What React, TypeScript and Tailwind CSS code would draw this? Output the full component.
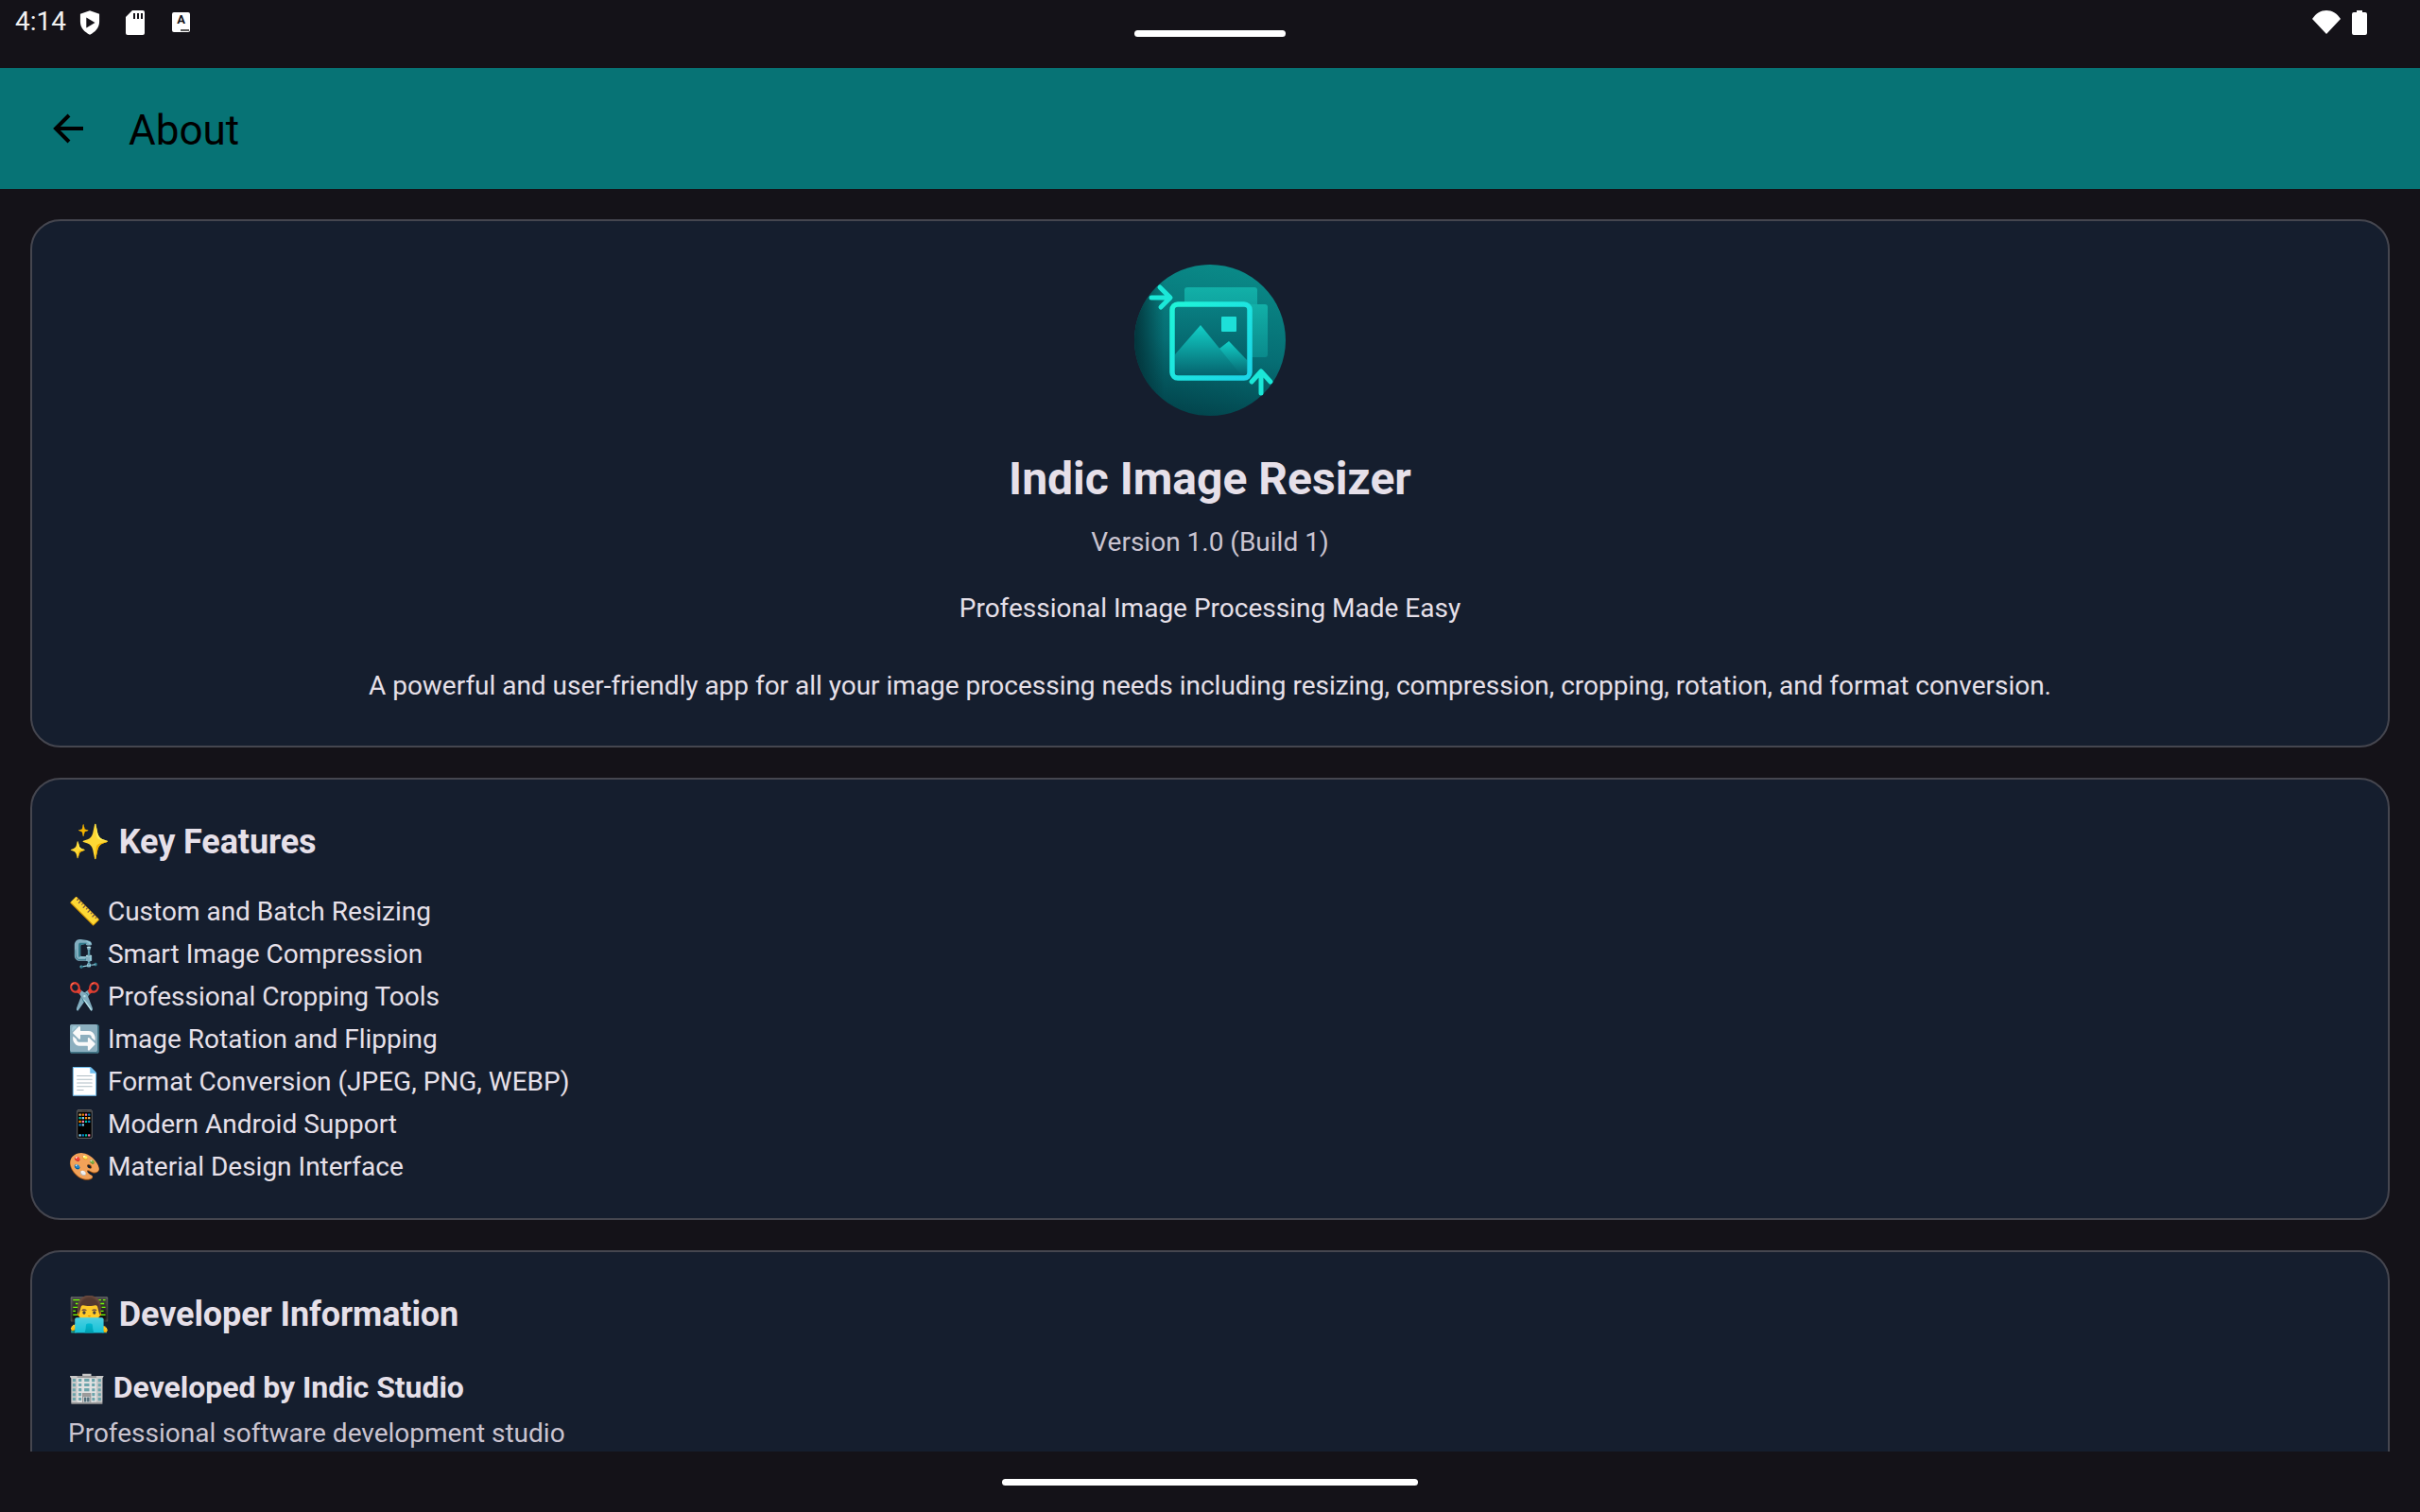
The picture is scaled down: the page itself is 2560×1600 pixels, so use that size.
const features = [
  { icon: "📏", label: "Custom and Batch Resizing" },
  { icon: "🗜️", label: "Smart Image Compression" },
  { icon: "✂️", label: "Professional Cropping Tools" },
  { icon: "🔄", label: "Image Rotation and Flipping" },
  { icon: "📄", label: "Format Conversion (JPEG, PNG, WEBP)" },
  { icon: "📱", label: "Modern Android Support" },
  { icon: "🎨", label: "Material Design Interface" },
];

function AppLogo() {
  return (
    <svg viewBox="0 0 160 160" className="w-[160px] h-[160px]">
      <defs>
        <linearGradient id="disc" x1="0.6" y1="0" x2="0.4" y2="1">
          <stop offset="0" stopColor="#0a8a88" />
          <stop offset="0.55" stopColor="#066e74" />
          <stop offset="1" stopColor="#02444c" />
        </linearGradient>
        <linearGradient id="shade" x1="0" y1="0" x2="1" y2="0">
          <stop offset="0" stopColor="#022c33" stopOpacity="0.85" />
          <stop offset="0.2" stopColor="#022c33" stopOpacity="0" />
        </linearGradient>
        <linearGradient id="frame" x1="0" y1="0" x2="1" y2="1">
          <stop offset="0" stopColor="#1ff5d8" />
          <stop offset="1" stopColor="#1bd4e8" />
        </linearGradient>
        <linearGradient id="back" x1="0.5" y1="0" x2="0.5" y2="1">
          <stop offset="0" stopColor="#12b0a8" />
          <stop offset="1" stopColor="#0a8a8c" />
        </linearGradient>
        <linearGradient id="inner" x1="0.5" y1="0" x2="0.5" y2="1">
          <stop offset="0" stopColor="#097f82" />
          <stop offset="1" stopColor="#035660" />
        </linearGradient>
        <linearGradient id="mount" x1="0.5" y1="0" x2="0.5" y2="1">
          <stop offset="0" stopColor="#12d0c8" />
          <stop offset="1" stopColor="#05646e" />
        </linearGradient>
      </defs>
      <circle cx="80" cy="80" r="80" fill="url(#disc)" />
      <circle cx="80" cy="80" r="80" fill="url(#shade)" />
      <rect x="53" y="24" width="77" height="60" rx="3" fill="url(#back)" />
      <rect x="100" y="42" width="41" height="56" rx="3" fill="url(#back)" />
      <rect x="40" y="42" width="82" height="78" rx="6" fill="url(#inner)" stroke="url(#frame)" strokeWidth="5.5" />
      <path d="M86 92 L100 81 L119 101 V114 Q119 117 116 117 H106 Z" fill="url(#mount)" />
      <path d="M43 95 L70 64 L113 117 H46 Q43 117 43 114 Z" fill="url(#mount)" />
      <rect x="92" y="55" width="16" height="16" rx="1" fill="#1ddfd8" />
      <path d="M18 35 H37 M27 24 L38 35 L28 45" fill="none" stroke="#1be8d8" strokeWidth="5" strokeLinecap="round" strokeLinejoin="round" />
      <path d="M134 136 V113 M124 124 L134 113 L144 124" fill="none" stroke="#1be8d8" strokeWidth="5" strokeLinecap="round" strokeLinejoin="round" />
    </svg>
  );
}

function StatusBar() {
  return (
    <div className="h-[72px] shrink-0 flex justify-between relative text-white">
      <div className="flex items-start pl-4 pt-[9px]">
        <span className="text-[28px] leading-[28px] font-['Roboto'] text-[#f1f1f1]">4:14</span>
        <svg viewBox="0 0 24 28" className="w-[22px] h-7 ml-[14px] mt-px">
          <path d="M12 0 L23 4 V13 C23 20 18 25 12 28 C6 25 1 20 1 13 V4 Z" fill="#fff" />
          <path d="M8 8 L18 14 L8 20 Z" fill="#141218" />
        </svg>
        <svg viewBox="0 0 20 26" className="w-5 h-[26px] ml-[27px] mt-[2px]">
          <path d="M7 0 H18 Q20 0 20 2 V24 Q20 26 18 26 H2 Q0 26 0 24 V7 Z" fill="#fff" />
          <path d="M8 3h2v6H8zM12 3h2v6h-2zM16 3h2v6h-2z" fill="#141218" />
        </svg>
        <div className="relative w-[19px] h-[21px] ml-[29px] mt-[4px] bg-white rounded-[2px] text-[#141218] text-[13px] leading-[16px] font-bold font-['Roboto'] text-center">
          A
          <span className="absolute right-[1px] bottom-[1px] w-[9px] h-[2px] bg-[#555]" />
        </div>
      </div>
      <div className="absolute left-[1200px] top-[32px] w-[160px] h-[7px] rounded-full bg-white" />
      <div className="flex items-start pr-[56px] pt-[11px] gap-3">
        <svg viewBox="0 0 30 26" className="w-[30px] h-[26px]">
          <path d="M15 25 L0 9 C4 3 9 0 15 0 C21 0 26 3 30 9 Z" fill="#fff" />
        </svg>
        <svg viewBox="0 0 16 26" className="w-4 h-[26px]">
          <path d="M5 0 H11 V2 H14 Q16 2 16 4 V24 Q16 26 14 26 H2 Q0 26 0 24 V4 Q0 2 2 2 H5 Z" fill="#fff" />
        </svg>
      </div>
    </div>
  );
}

export default function App() {
  return (
    <div className="w-[2560px] h-[1600px] overflow-hidden bg-[#141218] flex flex-col font-['Roboto',sans-serif] text-[#e6e0e9]">
      <StatusBar />
      <header className="h-[128px] shrink-0 bg-[#077375] flex items-center text-black">
        <svg viewBox="0 0 32 32" className="w-8 h-8 ml-[56px]" fill="none" stroke="currentColor" strokeWidth="4">
          <path d="M32 16 H3 M17 2 L3 16 L17 30" />
        </svg>
        <h1 className="ml-[48px] mt-1 text-[44px] leading-none font-normal">About</h1>
      </header>
      <main className="flex-1 min-h-0 overflow-hidden px-8 pt-8 flex flex-col gap-8">
        <section className="shrink-0 h-[559px] rounded-[32px] border-2 border-[#45464f] bg-[#151e2e] flex flex-col items-center pt-[46px]">
          <AppLogo />
          <h2 className="mt-[39px] text-[48px] leading-[56px] font-bold">Indic Image Resizer</h2>
          <p className="mt-[21px] text-[28px] leading-[36px] text-[#cac4d0]">Version 1.0 (Build 1)</p>
          <p className="mt-[34px] text-[28px] leading-[36px]">Professional Image Processing Made Easy</p>
          <p className="mt-[46px] text-[28px] leading-[36px] tracking-[-0.02px]">
            A powerful and user-friendly app for all your image processing needs including resizing, compression, cropping, rotation, and format conversion.
          </p>
        </section>
        <section className="shrink-0 h-[468px] rounded-[32px] border-2 border-[#45464f] bg-[#151e2e] pl-[38px] pt-[41px]">
          <h3 className="text-[36px] leading-[50px] font-bold tracking-[-0.1px]">✨ Key Features</h3>
          <ul className="mt-[26px]">
            {features.map((f) => (
              <li key={f.label} className="text-[28px] leading-[45px]">
                {f.icon} {f.label}
              </li>
            ))}
          </ul>
        </section>
        <section className="shrink-0 h-[300px] rounded-[32px] border-2 border-[#45464f] bg-[#151e2e] pl-[38px] pt-[41px]">
          <h3 className="text-[36px] leading-[50px] font-bold tracking-[-0.1px]">👨‍💻 Developer Information</h3>
          <p className="mt-[31px] text-[32px] leading-[42px] font-bold tracking-[-0.05px]">🏢 Developed by Indic Studio</p>
          <p className="mt-[10px] text-[28px] leading-[36px] text-[#cac4d0]">Professional software development studio</p>
        </section>
      </main>
      <div className="h-[64px] shrink-0 flex justify-center items-start pt-[29px]">
        <div className="w-[440px] h-[7px] rounded-full bg-white" />
      </div>
    </div>
  );
}
